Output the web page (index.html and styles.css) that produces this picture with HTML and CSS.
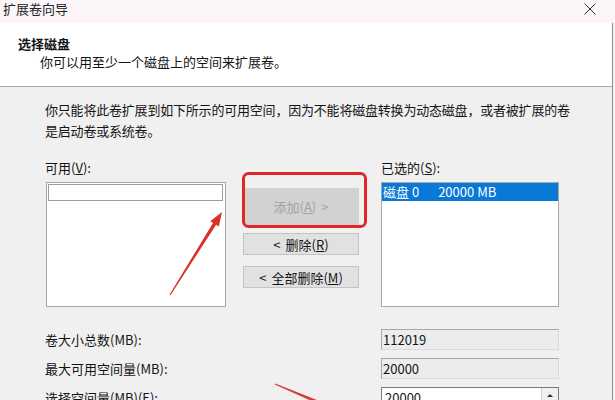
FILE: index.html
```html
<!DOCTYPE html>
<html lang="zh-CN">
<head>
  <meta charset="UTF-8">
  <meta name="viewport" content="width=device-width, initial-scale=1.0">
  <title>扩展卷向导</title>
  <link rel="stylesheet" href="styles.css">
</head>
<body>
  <div class="titlebar">
    <span class="title">扩展卷向导</span>
    <svg class="close" width="12" height="12" viewBox="0 0 12 12">
      <path d="M0.5 0.5 L11.5 11.5 M11.5 0.5 L0.5 11.5" stroke="#333" stroke-width="1" fill="none"/>
    </svg>
  </div>

  <div class="window">
    <!-- 向导页头 -->
    <div class="header">
      <div class="header-title">选择磁盘</div>
      <div class="header-sub">你可以用至少一个磁盘上的空间来扩展卷。</div>
    </div>

    <div class="content">
      <p class="intro">你只能将此卷扩展到如下所示的可用空间，因为不能将磁盘转换为动态磁盘，或者被扩展的卷是启动卷或系统卷。</p>

      <div class="picker">
        <div class="col-list">
          <div class="label">可用(<u>V</u>):</div>
          <div class="listbox left">
            <div class="item focus"></div>
          </div>
        </div>

        <div class="col-buttons">
          <button class="btn add" disabled>添加(<u>A</u>)<span class="gt">&gt;</span></button>
          <button class="btn remove"><span class="lt">&lt;</span>删除(<u>R</u>)</button>
          <button class="btn remove-all"><span class="lt">&lt;</span>全部删除(<u>M</u>)</button>
        </div>

        <div class="col-list right-col">
          <div class="label">已选的(<u>S</u>):</div>
          <div class="listbox right">
            <div class="item selected"><span class="disk">磁盘 0</span><span>20000 MB</span></div>
          </div>
        </div>
      </div>

      <div class="sizes">
        <div class="size-label">卷大小总数(MB):</div>
        <div class="field readonly">112019</div>
        <div class="size-label">最大可用空间量(MB):</div>
        <div class="field readonly">20000</div>
        <div class="size-label">选择空间量(MB)(<u>E</u>):</div>
        <div class="field spin">
          <span class="spin-value">20000</span>
          <span class="spin-btn"><span class="spin-up"></span></span>
        </div>
      </div>
    </div>
  </div>

  <!-- 标注：红框和箭头 -->
  <svg class="marks" width="615" height="400" viewBox="0 0 615 400">
    <rect x="243.5" y="173.5" width="122" height="53" rx="5" fill="none" stroke="#e1262a" stroke-width="3"/>
    <polygon fill="#dc2f2b" points="170.5,295.3 216.1,224.8 218.8,226.5 222,212 210.3,221.2 213,222.9 169.5,294.7"/>
    <polygon fill="#d63a33" points="275.2,383.5 320.6,401.5 319.4,404.5 274.8,384.5"/>
  </svg>
</body>
</html>
```

FILE: styles.css
```css
body {
  margin: 0;
  width: 615px;
  height: 400px;
  overflow: hidden;
  position: relative;
  background-color: #f4f4f4;
  color: #141414;
  font-family: "Noto Sans CJK SC", "Noto Sans", sans-serif;
  font-size: 13px;
}
.titlebar {
  height: 23px;
  background-color: #fcf5f9;
  display: flex;
  justify-content: space-between;
  align-items: flex-start;
  padding: 0 3px;
  line-height: 18px;
}
.title {
  color: #222;
}
.close {
  margin-top: 3px;
  margin-right: 16px;
}
.window {
  width: 612px;
  height: 377px;
  background-color: #f0f0f0;
  border-right: 1px solid #8c8c8c;
}
.header {
  box-sizing: border-box;
  height: 64px;
  background-color: #fff;
  border-bottom: 1px solid #a8a8a8;
  padding: 12px 0 0 18px;
  line-height: 18px;
}
.header-title {
  font-weight: bold;
}
.header-sub {
  padding-left: 22px;
}
.content {
  padding: 12px 0 0 45px;
}
.intro {
  margin: 0;
  width: 530px;
  line-height: 21px;
  letter-spacing: -0.2px;
}
.picker {
  display: flex;
  margin-top: 17px;
}
.label {
  line-height: 20px;
  margin-bottom: 4px;
}
.listbox {
  box-sizing: border-box;
  height: 125px;
  background-color: #fff;
  border: 1px solid #a8a8a8;
}
.listbox.left {
  width: 180px;
  margin-left: 1px;
  padding: 1px;
}
.listbox.right {
  width: 178px;
}
.item {
  box-sizing: border-box;
  height: 17px;
}
.item.focus {
  border: 1px solid #9c9c9c;
  margin-right: 1px;
}
.item.selected {
  height: 18px;
  background-color: #0a78d6;
  color: #fff;
  line-height: 18px;
  padding-left: 1px;
}
.disk {
  margin-right: 19px;
}
.col-buttons {
  display: flex;
  flex-direction: column;
  width: 116px;
  margin-left: 17px;
  padding-top: 30px;
}
.btn {
  box-sizing: border-box;
  height: 22px;
  padding: 0;
  background-color: #e1e1e1;
  border: 1px solid #c4c4c4;
  color: #141414;
  font-family: inherit;
  font-size: 13px;
}
.btn .lt {
  margin-right: 5px;
}
.btn .gt {
  margin-left: 5px;
}
.btn.add {
  height: 37px;
  background-color: #d2d2d2;
  border-color: #d2d2d2;
  color: #a3a3a3;
}
.btn.remove {
  margin-top: 8px;
}
.btn.remove-all {
  margin-top: 11px;
}
.right-col {
  margin-left: 22px;
}
.sizes {
  display: grid;
  grid-template-columns: 336px 178px;
  grid-auto-rows: 21px;
  row-gap: 8px;
  margin-top: 22px;
}
.size-label {
  line-height: 21px;
}
.field {
  box-sizing: border-box;
  height: 21px;
  line-height: 19px;
  padding-left: 1px;
  border: 1px solid;
}
.field.readonly {
  background-color: #ececec;
  border-color: #a8a8a8 #dadada #dadada #a8a8a8;
}
.field.spin {
  display: flex;
  background-color: #fff;
  border-color: #7a7a7a;
  padding-left: 3px;
}
.spin-value {
  flex: 1;
}
.spin-btn {
  width: 17px;
  background-color: #f0f0f0;
  border-left: 1px solid #cfcfcf;
  display: flex;
  justify-content: center;
  padding-top: 6px;
  box-sizing: border-box;
}
.spin-up {
  width: 0;
  height: 0;
  border-left: 3px solid transparent;
  border-right: 3px solid transparent;
  border-bottom: 3px solid #333;
}
.marks {
  position: absolute;
  top: 0;
  left: 0;
  pointer-events: none;
}
```
